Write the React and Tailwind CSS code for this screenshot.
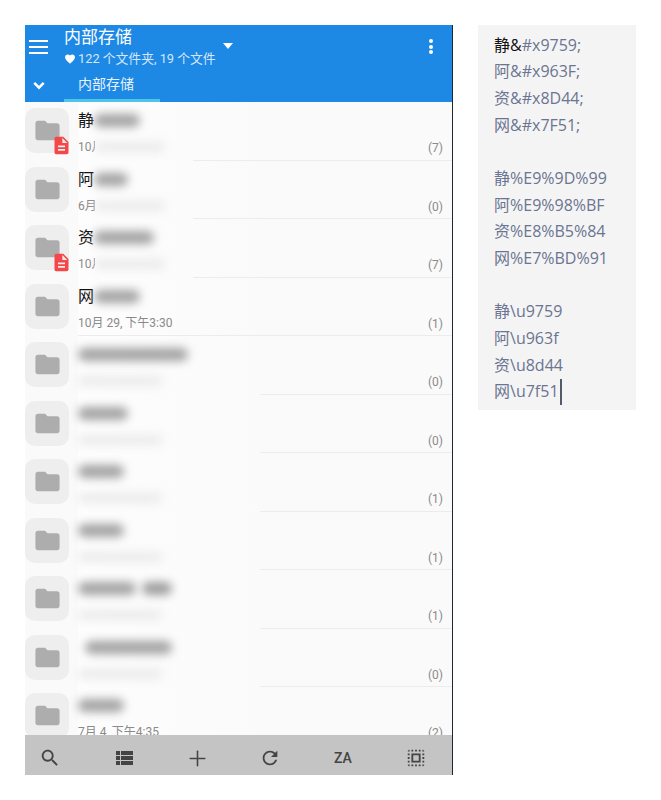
import { Plus } from "lucide-react";

const ROWS = [
  { id: 1, lead: "静", blob: "w-[46px]", date: "10月", count: 7, doc: true, line: "ml-[115px]" },
  { id: 2, lead: "阿", blob: "w-[34px]", date: "6月", count: 0, line: "ml-[115px]" },
  { id: 3, lead: "资", blob: "w-[60px]", date: "10月", count: 7, doc: true, line: "ml-[115px]" },
  { id: 4, lead: "网", blob: "w-[46px]", date: "10月 29, 下午3:30", count: 1, clear: true, line: "ml-0" },
  { id: 5, blob: "w-[110px]", count: 0, line: "ml-[182px]" },
  { id: 6, blob: "w-[50px]", count: 0, line: "ml-[182px]" },
  { id: 7, blob: "w-[46px]", count: 1, line: "ml-[182px]" },
  { id: 8, blob: "w-[46px]", count: 1, line: "ml-[182px]" },
  { id: 9, blob: "w-[58px]", extra: true, count: 1, line: "ml-[182px]" },
  { id: 10, blob: "ml-[7px] w-[87px]", count: 0, line: "ml-[182px]" },
  { id: 11, blob: "w-[46px]", date: "7月 4, 下午4:35", count: 2, clear: true, line: "ml-0" },
];

const NOTES = [
  ["静", "&#x9759;"], ["阿", "&#x963F;"], ["资", "&#x8D44;"], ["网", "&#x7F51;"],
  null,
  ["静", "%E9%9D%99"], ["阿", "%E9%98%BF"], ["资", "%E8%B5%84"], ["网", "%E7%BD%91"],
  null,
  ["静", "\\u9759"], ["阿", "\\u963f"], ["资", "\\u8d44"], ["网", "\\u7f51"],
];

function Icon({ d, className }) {
  return (
    <svg viewBox="0 0 24 24" fill="currentColor" className={className}>
      <path d={d} />
    </svg>
  );
}

const FOLDER = "M10 4H4c-1.1 0-1.99.9-1.99 2L2 18c0 1.1.9 2 2 2h16c1.1 0 2-.9 2-2V8c0-1.1-.9-2-2-2h-8l-2-2z";
const DOC = "M14 2H6c-1.1 0-1.99.9-1.99 2L4 20c0 1.1.89 2 1.99 2H18c1.1 0 2-.9 2-2V8l-6-6zm2 16H8v-2h8v2zm0-4H8v-2h8v2zm-3-5V3.5L18.5 9H13z";
const HEART = "M12 21.35l-1.45-1.32C5.4 15.36 2 12.28 2 8.5 2 5.42 4.42 3 7.5 3c1.74 0 3.41.81 4.5 2.09C13.09 3.81 14.76 3 16.5 3 19.58 3 22 5.42 22 8.5c0 3.78-3.4 6.86-8.55 11.54L12 21.35z";
const SEARCH = "M15.5 14h-.79l-.28-.27C15.41 12.59 16 11.11 16 9.5 16 5.91 13.09 3 9.5 3S3 5.91 3 9.5 5.91 16 9.5 16c1.61 0 3.09-.59 4.23-1.57l.27.28v.79l5 4.99L20.49 19l-4.99-5zm-6 0C7.01 14 5 11.99 5 9.5S7.01 5 9.5 5 14 7.01 14 9.5 11.99 14 9.5 14z";
const LIST = "M4 14h4v-4H4v4zm0 5h4v-4H4v4zM4 9h4V5H4v4zm5 5h12v-4H9v4zm0 5h12v-4H9v4zM9 5v4h12V5H9z";
const REFRESH = "M17.65 6.35C16.2 4.9 14.21 4 12 4c-4.42 0-7.99 3.58-7.99 8s3.57 8 7.99 8c3.73 0 6.84-2.55 7.73-6h-2.08c-.82 2.33-3.04 4-5.65 4-3.31 0-6-2.69-6-6s2.69-6 6-6c1.66 0 3.14.69 4.22 1.78L13 11h7V4l-2.35 2.35z";
const SELECT = "M3 5h2V3c-1.1 0-2 .9-2 2zm0 8h2v-2H3v2zm4 8h2v-2H7v2zM3 9h2V7H3v2zm10-6h-2v2h2V3zm6 0v2h2c0-1.1-.9-2-2-2zM5 21v-2H3c0 1.1.9 2 2 2zm-2-4h2v-2H3v2zM9 3H7v2h2V3zm2 18h2v-2h-2v2zm8-8h2v-2h-2v2zm0 8c1.1 0 2-.9 2-2h-2v2zm0-12h2V7h-2v2zm0 8h2v-2h-2v2zm-4 4h2v-2h-2v2zm0-16h2V3h-2v2zM7 17h10V7H7v10zm2-8h6v6H9V9z";

function Row({ row }) {
  return (
    <div className="flex h-[58.5px] shrink-0">
      <div className="relative mt-[6px] flex h-[45px] w-[44px] shrink-0 items-center justify-center rounded-[10px] bg-[#eeeeee]">
        <Icon d={FOLDER} className="h-[29px] w-[29px] text-[#adadad]" />
        {row.doc && (
          <Icon d={DOC} className="absolute right-[-3px] bottom-[-3px] h-[21px] w-[21px] text-[#f4474a]" />
        )}
      </div>
      <div className="ml-[9px] flex min-w-0 flex-1 flex-col bg-gradient-to-r from-[#fdfdfd] to-[#fafafa] to-50%">
        <div className="flex h-[37px] items-start pt-[7px]">
          {row.lead && <span className="w-[16px] text-[16px] leading-[24px] text-[#111111]">{row.lead}</span>}
          <div className={`mt-[5px] h-[13px] rounded-full bg-[#a2a2a2] blur-[5px] ${row.blob}`} />
          {row.extra && <div className="mt-[5px] ml-[6px] h-[13px] w-[30px] rounded-full bg-[#9c9c9c] blur-[5px]" />}
        </div>
        <div className="flex h-[20.5px] items-start justify-between pr-[9px]">
          <div className="flex min-w-0 items-start">
            {row.clear ? (
              <span className="mt-[-1px] text-[12px] leading-[18px] text-[#8a8a8a]">{row.date}</span>
            ) : (
              <>
                {row.lead && (
                  <span className="mt-[-1px] w-[17px] overflow-hidden whitespace-nowrap text-[12px] leading-[18px] text-[#8a8a8a]">
                    {row.date}
                  </span>
                )}
                <div className={`mt-[3px] h-[10px] rounded-full bg-[#ebebeb] blur-[5px] ${row.lead ? "w-[70px]" : "w-[84px]"}`} />
              </>
            )}
          </div>
          <span className="text-[12px] leading-[18px] text-[#8a8a8a]">({row.count})</span>
        </div>
        <div className={`h-px bg-[#ececec] ${row.line}`} />
      </div>
    </div>
  );
}

export default function App() {
  return (
    <div className="flex h-[800px] w-[661px] items-start bg-white pt-[25px] pl-[25px] font-['Roboto','Noto_Sans_CJK_SC',sans-serif]">
      {/* phone */}
      <div className="flex h-[750px] w-[428px] shrink-0 flex-col overflow-hidden border-r border-[#1c2530] bg-[#fafafa]">
        <div className="h-[77px] shrink-0 bg-[#1e88e5] text-white">
          <div className="flex h-[52px]">
            <div className="ml-[4px] mt-[15px] flex h-[14px] w-[19px] flex-col justify-between">
              <div className="h-[2px] bg-white" />
              <div className="h-[2px] bg-white" />
              <div className="h-[2px] bg-white" />
            </div>
            <div className="ml-[16px] pt-[2px]">
              <div className="text-[17px] leading-[21px]">内部存储</div>
              <div className="flex items-center text-[12.8px] leading-[21px] text-[#d4e7fa]">
                <Icon d={HEART} className="mr-[2px] h-[12px] w-[12px] text-white" />
                122 个文件夹, 19 个文件
              </div>
            </div>
            <div className="mt-[18px] ml-[7px] h-0 w-0 border-x-[5px] border-t-[6px] border-x-transparent border-t-white" />
            <div className="ml-auto mr-[19px] mt-[14px] flex h-[15px] flex-col justify-between">
              <div className="h-[4px] w-[4px] rounded-full bg-white" />
              <div className="h-[4px] w-[4px] rounded-full bg-white" />
              <div className="h-[4px] w-[4px] rounded-full bg-white" />
            </div>
          </div>
          <div className="flex h-[25px]">
            <svg viewBox="0 0 14 10" fill="none" stroke="currentColor" strokeWidth="3" className="ml-[8px] mt-[4px] h-[9px] w-[12px]">
              <path d="M1.5 2 L7 7.5 L12.5 2" />
            </svg>
            <div className="ml-[19px] flex w-[96px] flex-col justify-between">
              <span className="pl-[14px] text-[14px] leading-[14px] text-[#e8f3fd]">内部存储</span>
              <div className="h-[3px] w-full bg-[#4fc3e8]" />
            </div>
          </div>
        </div>

        <div className="min-h-0 flex-1 overflow-hidden">
          {ROWS.map((row) => (
            <Row key={row.id} row={row} />
          ))}
        </div>

        <div className="flex h-[40px] shrink-0 items-center bg-[#c4c4c4] pt-[6px] text-[#444444]">
          <div className="flex w-[50px] justify-center"><Icon d={SEARCH} className="h-[22px] w-[22px]" /></div>
          <div className="ml-[24px] flex w-[50px] justify-center"><Icon d={LIST} className="h-[24px] w-[24px]" /></div>
          <div className="ml-[23px] flex w-[50px] justify-center"><Plus size={25} strokeWidth={1.5} /></div>
          <div className="ml-[23px] flex w-[50px] justify-center"><Icon d={REFRESH} className="h-[22px] w-[22px]" /></div>
          <div className="ml-[23px] flex w-[50px] justify-center text-[14px] font-medium">ZA</div>
          <div className="ml-[23px] flex w-[50px] justify-center"><Icon d={SELECT} className="h-[22px] w-[22px]" /></div>
        </div>
      </div>

      {/* notes */}
      <div className="ml-[25px] h-[385px] w-[158px] shrink-0 bg-[#f4f4f5] pt-[6.5px] pl-[16px] font-['Open_Sans','Noto_Sans_CJK_SC',sans-serif] text-[16px] leading-[26.7px] text-[#6b7490]">
        {NOTES.map((note, i) => (
          <div key={i} className="flex h-[26.7px] items-center">
            {note && (
              <>
                {i === 0 ? (
                  <span className="text-[#111111]">{note[0]}&amp;</span>
                ) : (
                  <span>{note[0]}</span>
                )}
                <span>{i === 0 ? note[1].slice(1) : note[1]}</span>
                {i === NOTES.length - 1 && <span className="ml-px h-[26px] w-[2px] bg-[#555a6a]" />}
              </>
            )}
          </div>
        ))}
      </div>
    </div>
  );
}
